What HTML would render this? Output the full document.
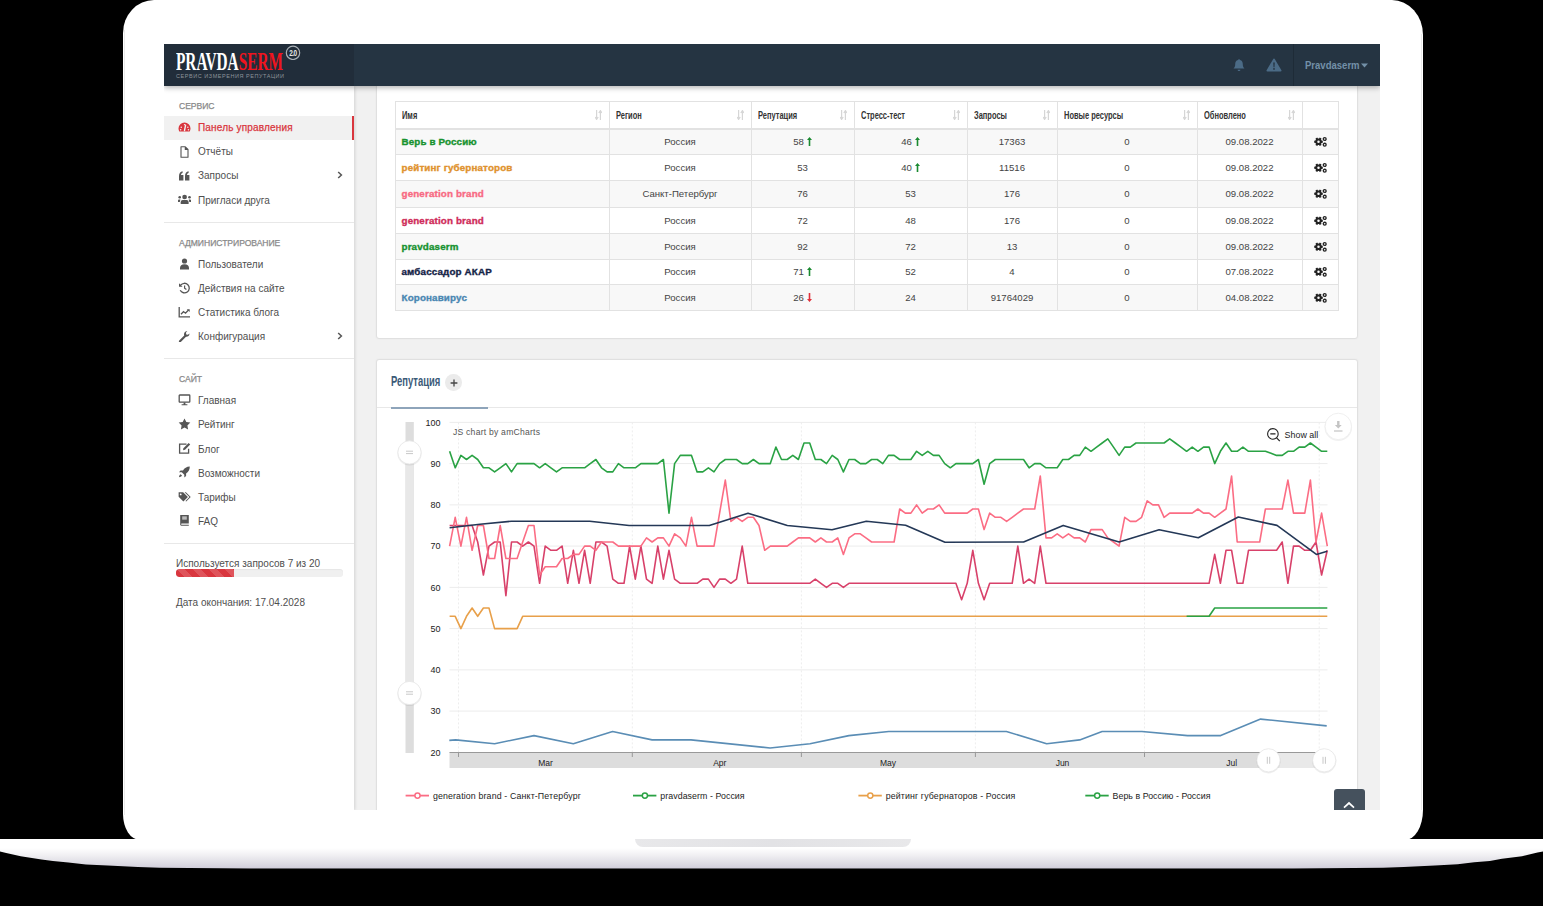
<!DOCTYPE html>
<html><head><meta charset="utf-8">
<style>
*{margin:0;padding:0;box-sizing:border-box}
html,body{width:1543px;height:906px;overflow:hidden;background:#000;font-family:"Liberation Sans",sans-serif}
.a{position:absolute}
#body{position:absolute;left:123px;top:0;width:1300px;height:840px;background:#fff;border-radius:31px 31px 18px 17px / 33px 35px 30px 26px}
#base{position:absolute;left:0;top:839px;width:1543px;height:30px;background:linear-gradient(#fff 0,#fff 9px,#f1f0f3 16px,#dedce4 24px,#d2cfdb 29px,#bdbac6 30px);clip-path:polygon(0 0,1543px 0,1543px 12.6px,1537.5px 13.6px,1522px 17.3px,1502px 19.8px,1489.8px 21.9px,1474.2px 23.2px,1457.7px 25.3px,1434.8px 26.6px,1403.7px 28.1px,1383px 28.7px,1293px 29.6px,250px 29.6px,160px 28.7px,137.9px 28.1px,107.8px 26.6px,86px 25.6px,68.4px 23.5px,52.9px 22px,41.5px 20.4px,20.7px 17.3px,6.2px 14.1px,0px 12.6px)}
#notch{position:absolute;left:635px;top:839px;width:276px;height:8px;background:linear-gradient(90deg,#e8e8ea,#e2e2e5 50%,#e8e8ea);border-radius:0 0 8px 8px}
#screen{position:absolute;left:164px;top:44px;width:1216px;height:766px;background:#f1f1f1;overflow:hidden}
#in{position:absolute;left:-164px;top:-44px;width:1543px;height:906px}
#hdr{position:absolute;left:164px;top:44px;width:1216px;height:42px;background:#253442;box-shadow:0 2px 5px rgba(0,0,0,.28);z-index:5}
#logo{position:absolute;left:0;top:0;width:190px;height:42px;background:#212d3a}
#side{position:absolute;left:164px;top:86px;width:190px;height:724px;background:#fff;box-shadow:1px 0 3px rgba(0,0,0,.13)}
.sl{position:absolute;left:179px;font-size:8.6px;color:#8a8a8a;line-height:12px;height:12px;margin-top:.8px;letter-spacing:-.05px;-webkit-text-stroke:.25px #8a8a8a}
.st{position:absolute;left:198px;font-size:10px;color:#4f4f4f;line-height:12px;height:12px;white-space:nowrap;margin-top:1.2px}
.ic{position:absolute;left:178px;width:13px;height:12px}
.ch{position:absolute;left:337px;width:6px;height:8px}
.dv{position:absolute;left:164px;width:190px;height:1px;background:#e8e8e8}
.panel{position:absolute;background:#fff;border:1px solid #e0e0e0;border-radius:3px;box-shadow:0 0 2px rgba(0,0,0,.05)}
.th{position:absolute;top:108.2px;font-size:11.5px;line-height:14px;color:#333;font-weight:bold;transform-origin:0 0;transform:scaleX(.65);white-space:nowrap}
.tn{position:absolute;left:401.5px;font-size:9.8px;line-height:13px;font-weight:bold;white-space:nowrap;letter-spacing:.15px;-webkit-text-stroke:.35px currentColor}
.td{position:absolute;font-size:9.6px;line-height:13px;color:#444;text-align:center;white-space:nowrap}
.ar{display:inline-block;width:5px;height:9px;margin-left:3px;vertical-align:-1px}
</style></head><body>
<div id="body"></div>
<div class="a" style="left:124px;top:30px;width:1px;height:785px;background:#e9e9e9"></div>
<div class="a" style="left:1421px;top:34px;width:1px;height:776px;background:#e9e9e9"></div>
<div id="base"></div>
<div id="notch"></div>
<div id="screen"><div id="in">
  <div id="side"></div>
  <!-- sidebar content -->
  <div class="sl" style="top:99px">СЕРВИС</div>
  <div class="a" style="left:164px;top:116px;width:190px;height:24px;background:#f1f1f1;border-right:2px solid #d9363e"></div>
  <svg class="ic" style="top:121px" viewBox="0 0 13 12"><path d="M6.5 1.5A6 6 0 0 0 .5 7.5c0 1.2.3 2 .8 2.9h10.4c.5-.9.8-1.7.8-2.9a6 6 0 0 0-6-6z" fill="#d9363e"/><path d="M6.5 9.5 7.6 4.2M3.2 6.2h.1M6.5 3.6h.1M9.8 6.2h.1M2.6 8.7h.1M10.4 8.7h.1" stroke="#f1f1f1" stroke-width="1.4" stroke-linecap="round"/></svg>
  <div class="st" style="top:121px;color:#d9363e;letter-spacing:.18px;-webkit-text-stroke:.25px #d9363e">Панель управления</div>
  <svg class="ic" style="top:146px" viewBox="0 0 13 12"><path d="M3 .8h4.3L10 3.5v7.7H3z M7.3.8v2.7H10" fill="none" stroke="#555" stroke-width="1.1" stroke-linejoin="round"/></svg>
  <div class="st" style="top:145px">Отчёты</div>
  <svg class="ic" style="top:170px" viewBox="0 0 13 12"><path d="M1 6.3C1 3.2 2.4 1.7 4.6 1.3v1.6C3.5 3.3 3 4 3 5h2.4v5.5H1zM7 6.3C7 3.2 8.4 1.7 10.6 1.3v1.6C9.5 3.3 9 4 9 5h2.4v5.5H7z" fill="#555"/></svg>
  <div class="st" style="top:169px">Запросы</div>
  <svg class="ch" style="top:171px" viewBox="0 0 6 8"><path d="M1.2 1 4.4 4 1.2 7" fill="none" stroke="#555" stroke-width="1.5"/></svg>
  <svg class="ic" style="top:194px" viewBox="0 0 13 12"><circle cx="6.6" cy="3" r="2.35" fill="#555"/><circle cx="1.7" cy="3.2" r="1.3" fill="#555"/><circle cx="11.5" cy="3.2" r="1.3" fill="#555"/><path d="M2.7 9.9V8.2c0-1.4.9-2.1 2-2.1h3.9c1.1 0 2 .7 2 2.1v1.7z" fill="#555"/><path d="M0 8V6.6c0-.7.5-1.1 1.1-1.1h1.3l-.6 2.5zM13.1 8V6.6c0-.7-.5-1.1-1.1-1.1h-1.3l.6 2.5z" fill="#555"/></svg>
  <div class="st" style="top:194px">Пригласи друга</div>
  <div class="dv" style="top:222px"></div>

  <div class="sl" style="top:236px">АДМИНИСТРИРОВАНИЕ</div>
  <svg class="ic" style="top:258px" viewBox="0 0 13 12"><circle cx="6.5" cy="3" r="2.6" fill="#555"/><path d="M2 11.5V10c0-2.3 1.6-3.8 4.5-3.8S11 7.7 11 10v1.5z" fill="#555"/></svg>
  <div class="st" style="top:258px">Пользователи</div>
  <svg class="ic" style="top:282px" viewBox="0 0 13 12"><path d="M2.6 3.2A4.8 4.8 0 1 1 2.2 8.3" fill="none" stroke="#555" stroke-width="1.3"/><path d="M1 1.2v3.6h3.6z" fill="#555"/><path d="M6.6 3.6v2.7l1.8 1.3" fill="none" stroke="#555" stroke-width="1.2"/></svg>
  <div class="st" style="top:282px">Действия на сайте</div>
  <svg class="ic" style="top:306px" viewBox="0 0 13 12"><path d="M1.2 1v9.8H12" fill="none" stroke="#555" stroke-width="1.3"/><path d="M3 8.3 5.5 5.6l2 1.6 3-3.2" fill="none" stroke="#555" stroke-width="1.3"/><path d="M8.8 3.2h2.9v2.9z" fill="#555"/></svg>
  <div class="st" style="top:306px">Статистика блога</div>
  <svg class="ic" style="top:330px" viewBox="0 0 13 12"><path d="M2 11.2 7 6.2" stroke="#555" stroke-width="2.2" stroke-linecap="round"/><path d="M6.2 5.5C5.6 3.6 6.7 1.2 9.3 1.1l-1.4 1.7.4 1.6 1.6.4 1.6-1.4c0 2.6-2.3 3.8-4.3 3.1z" fill="#555"/></svg>
  <div class="st" style="top:330px">Конфигурация</div>
  <svg class="ch" style="top:332px" viewBox="0 0 6 8"><path d="M1.2 1 4.4 4 1.2 7" fill="none" stroke="#555" stroke-width="1.5"/></svg>
  <div class="dv" style="top:358px"></div>

  <div class="sl" style="top:372px">САЙТ</div>
  <svg class="ic" style="top:394px" viewBox="0 0 13 12"><rect x="1.2" y="1" width="10.6" height="7.2" rx=".6" fill="none" stroke="#555" stroke-width="1.3"/><path d="M5.6 8.6h1.8v1.6h2v1H3.6v-1h2z" fill="#555"/></svg>
  <div class="st" style="top:394px">Главная</div>
  <svg class="ic" style="top:418px" viewBox="0 0 13 12"><path d="M6.5.4l1.8 3.7 4 .5-2.9 2.8.7 4-3.6-1.9-3.6 1.9.7-4L.7 4.6l4-.5z" fill="#555"/></svg>
  <div class="st" style="top:418px">Рейтинг</div>
  <svg class="ic" style="top:442px" viewBox="0 0 13 12"><path d="M8.5 2.2H1.6v9h9V6.8" fill="none" stroke="#555" stroke-width="1.3"/><path d="M5 8.2l.4-2 5.2-5.2 1.6 1.6L7 7.8z" fill="#555"/></svg>
  <div class="st" style="top:443px">Блог</div>
  <svg class="ic" style="top:466px" viewBox="0 0 13 12"><path d="M11.8.6C8.5.6 6.5 2.3 5 4.5H2.5L1 6.3h2.8l2.5 2.5V11.6l1.8-1.5V7.6c2.2-1.5 3.7-3.5 3.7-7z" fill="#555"/><path d="M2.6 8.2c-1 .6-1.6 2-1.6 3 1 0 2.4-.6 3-1.6z" fill="#555"/></svg>
  <div class="st" style="top:467px">Возможности</div>
  <svg class="ic" style="top:491px" viewBox="0 0 13 12"><path d="M.6 1.3h4.5l4.8 4.8-4.5 4.5L.6 5.8z" fill="#555"/><circle cx="2.7" cy="3.4" r=".9" fill="#fff"/><path d="M6.6 1.3h1.3l4.8 4.8-4.5 4.5-.7-.6 3.9-3.9z" fill="#555"/></svg>
  <div class="st" style="top:491px">Тарифы</div>
  <svg class="ic" style="top:514px" viewBox="0 0 13 12"><path d="M2.2 1h8.6v8.4H3.5a.8.8 0 0 0 0 1.3h7.3v1H3.3c-.7 0-1.1-.5-1.1-1.2z" fill="#555"/><rect x="4.2" y="2.6" width="4.6" height="1" fill="#fff"/><rect x="4.2" y="4.4" width="4.6" height="1" fill="#fff"/></svg>
  <div class="st" style="top:515px">FAQ</div>
  <div class="dv" style="top:543px"></div>

  <div class="st" style="left:176px;top:557px">Используется запросов 7 из 20</div>
  <div class="a" style="left:176px;top:569px;width:167px;height:8px;background:#f0f0f0;border-radius:3px;overflow:hidden;box-shadow:inset 0 1px 1px rgba(0,0,0,.04)"><div class="a" style="left:0;top:0;width:58px;height:8px;background:#d9363e linear-gradient(45deg,rgba(255,255,255,.15) 25%,transparent 25%,transparent 50%,rgba(255,255,255,.15) 50%,rgba(255,255,255,.15) 75%,transparent 75%,transparent);background-size:16px 16px;border-radius:3px 0 0 3px"></div></div>
  <div class="st" style="left:176px;top:596px">Дата окончания: 17.04.2028</div>

  <!-- header -->
  <div id="hdr"><div id="logo">
    <div class="a" id="lt" style="left:12px;top:3.2px;font-family:'Liberation Serif',serif;font-size:24.5px;line-height:30px;color:#fff;font-weight:bold;transform-origin:0 0;transform:scaleX(.625);white-space:nowrap;letter-spacing:0">PRAVDA<span style="color:#f0141e">SERM</span></div>
    <svg class="a" style="left:121px;top:0px" width="16" height="16" viewBox="0 0 16 16"><circle cx="8" cy="8.8" r="6.7" fill="none" stroke="#aab1b7" stroke-width="1.2"/><text x="8" y="12" text-anchor="middle" font-family="Liberation Sans" font-weight="bold" font-size="9.2" fill="#e8e8e8" letter-spacing="-.8" transform="translate(8 0) scale(.7 1) translate(-8 0)">2.0</text></svg>
    <div class="a" id="ls" style="left:12px;top:29px;font-size:5.5px;line-height:7px;color:#8d9399;letter-spacing:.55px;white-space:nowrap">СЕРВИС ИЗМЕРЕНИЯ РЕПУТАЦИИ</div>
  </div>
  <svg class="a" style="left:1068px;top:14px" width="14" height="14" viewBox="0 0 14 14"><path d="M7 1.2c.6 0 1 .4 1 .9 2 .5 2.8 2 2.8 4.2 0 2.2.6 3.3 1.7 4.3H1.5c1.1-1 1.7-2.1 1.7-4.3 0-2.2.8-3.7 2.8-4.2 0-.5.4-.9 1-.9z" fill="#4b6b86"/><path d="M5.6 11.8h2.8c0 .8-.6 1.3-1.4 1.3s-1.4-.5-1.4-1.3z" fill="#4b6b86"/></svg>
  <svg class="a" style="left:1102px;top:14px" width="16" height="14" viewBox="0 0 16 14"><path d="M8 .6c.4 0 .7.2.9.6l6.5 11c.4.7 0 1.4-.8 1.4H1.4c-.8 0-1.2-.7-.8-1.4l6.5-11c.2-.4.5-.6.9-.6z" fill="#4b6b86"/><path d="M7.2 4.6h1.6l-.3 4.6h-1z" fill="#253442"/><circle cx="8" cy="10.9" r=".9" fill="#253442"/></svg>
  <div class="a" style="left:1129px;top:0;width:1px;height:42px;background:#1e2b37"></div>
  <div class="a" style="left:1140.5px;top:15px;font-size:10.6px;line-height:13px;color:#7390a8;font-weight:bold;white-space:nowrap;transform-origin:0 0;transform:scaleX(.9)">Pravdaserm</div>
  <svg class="a" style="left:1197px;top:19px" width="7" height="5" viewBox="0 0 7 5"><path d="M0 .5h7L3.5 4.5z" fill="#7390a8"/></svg>
  </div>
  <div class="panel" style="left:376px;top:64px;width:982px;height:275px"></div>
<div class="a" style="left:395px;top:128px;width:943px;height:26px;background:#f8f8f8"></div>
<div class="a" style="left:395px;top:154px;width:943px;height:26px;background:#fff"></div>
<div class="a" style="left:395px;top:180px;width:943px;height:27px;background:#f8f8f8"></div>
<div class="a" style="left:395px;top:207px;width:943px;height:26px;background:#fff"></div>
<div class="a" style="left:395px;top:233px;width:943px;height:26px;background:#f8f8f8"></div>
<div class="a" style="left:395px;top:259px;width:943px;height:25px;background:#fff"></div>
<div class="a" style="left:395px;top:284px;width:943px;height:26px;background:#f8f8f8"></div>
<div class="a" style="left:395px;top:101px;width:944px;height:1px;background:#e2e2e2"></div>
<div class="a" style="left:395px;top:128px;width:944px;height:2px;background:#e2e2e2"></div>
<div class="a" style="left:395px;top:154px;width:944px;height:1px;background:#e2e2e2"></div>
<div class="a" style="left:395px;top:180px;width:944px;height:1px;background:#e2e2e2"></div>
<div class="a" style="left:395px;top:207px;width:944px;height:1px;background:#e2e2e2"></div>
<div class="a" style="left:395px;top:233px;width:944px;height:1px;background:#e2e2e2"></div>
<div class="a" style="left:395px;top:259px;width:944px;height:1px;background:#e2e2e2"></div>
<div class="a" style="left:395px;top:284px;width:944px;height:1px;background:#e2e2e2"></div>
<div class="a" style="left:395px;top:310px;width:944px;height:1px;background:#e2e2e2"></div>
<div class="a" style="left:395px;top:101px;width:1px;height:210px;background:#e2e2e2"></div>
<div class="a" style="left:609px;top:101px;width:1px;height:210px;background:#e2e2e2"></div>
<div class="a" style="left:751px;top:101px;width:1px;height:210px;background:#e2e2e2"></div>
<div class="a" style="left:854px;top:101px;width:1px;height:210px;background:#e2e2e2"></div>
<div class="a" style="left:967px;top:101px;width:1px;height:210px;background:#e2e2e2"></div>
<div class="a" style="left:1057px;top:101px;width:1px;height:210px;background:#e2e2e2"></div>
<div class="a" style="left:1197px;top:101px;width:1px;height:210px;background:#e2e2e2"></div>
<div class="a" style="left:1302px;top:101px;width:1px;height:210px;background:#e2e2e2"></div>
<div class="a" style="left:1338px;top:101px;width:1px;height:210px;background:#e2e2e2"></div>
<div class="th" style="left:401.8px">Имя</div>
<svg class="a" style="left:595px;top:110px" width="7" height="10" viewBox="0 0 7 10"><path d="M1.6 0v8M0 7l1.6 2.4L3.2 7M5.4 10V2M3.8 3l1.6-2.4L7 3" fill="none" stroke="#d6d6d6" stroke-width="1.2"/></svg>
<div class="th" style="left:615.8px">Регион</div>
<svg class="a" style="left:737px;top:110px" width="7" height="10" viewBox="0 0 7 10"><path d="M1.6 0v8M0 7l1.6 2.4L3.2 7M5.4 10V2M3.8 3l1.6-2.4L7 3" fill="none" stroke="#d6d6d6" stroke-width="1.2"/></svg>
<div class="th" style="left:757.8px">Репутация</div>
<svg class="a" style="left:840px;top:110px" width="7" height="10" viewBox="0 0 7 10"><path d="M1.6 0v8M0 7l1.6 2.4L3.2 7M5.4 10V2M3.8 3l1.6-2.4L7 3" fill="none" stroke="#d6d6d6" stroke-width="1.2"/></svg>
<div class="th" style="left:860.8px">Стресс-тест</div>
<svg class="a" style="left:953px;top:110px" width="7" height="10" viewBox="0 0 7 10"><path d="M1.6 0v8M0 7l1.6 2.4L3.2 7M5.4 10V2M3.8 3l1.6-2.4L7 3" fill="none" stroke="#d6d6d6" stroke-width="1.2"/></svg>
<div class="th" style="left:973.8px">Запросы</div>
<svg class="a" style="left:1043px;top:110px" width="7" height="10" viewBox="0 0 7 10"><path d="M1.6 0v8M0 7l1.6 2.4L3.2 7M5.4 10V2M3.8 3l1.6-2.4L7 3" fill="none" stroke="#d6d6d6" stroke-width="1.2"/></svg>
<div class="th" style="left:1063.8px">Новые ресурсы</div>
<svg class="a" style="left:1183px;top:110px" width="7" height="10" viewBox="0 0 7 10"><path d="M1.6 0v8M0 7l1.6 2.4L3.2 7M5.4 10V2M3.8 3l1.6-2.4L7 3" fill="none" stroke="#d6d6d6" stroke-width="1.2"/></svg>
<div class="th" style="left:1203.8px">Обновлено</div>
<svg class="a" style="left:1288px;top:110px" width="7" height="10" viewBox="0 0 7 10"><path d="M1.6 0v8M0 7l1.6 2.4L3.2 7M5.4 10V2M3.8 3l1.6-2.4L7 3" fill="none" stroke="#d6d6d6" stroke-width="1.2"/></svg>
<div class="tn" style="top:134.7px;color:#17922f">Верь в Россию</div>
<div class="td" style="left:609px;top:134.7px;width:142px">Россия</div>
<div class="td" style="left:751px;top:134.7px;width:103px">58<svg class="ar" viewBox="0 0 5 9"><path d="M2.5 0 5 3H3.3v6H1.7V3H0z" fill="#1a8a30"/></svg></div>
<div class="td" style="left:854px;top:134.7px;width:113px">46<svg class="ar" viewBox="0 0 5 9"><path d="M2.5 0 5 3H3.3v6H1.7V3H0z" fill="#1a8a30"/></svg></div>
<div class="td" style="left:967px;top:134.7px;width:90px">17363</div>
<div class="td" style="left:1057px;top:134.7px;width:140px">0</div>
<div class="td" style="left:1197px;top:134.7px;width:105px">09.08.2022</div>
<svg class="a" style="left:1314px;top:136px" width="13" height="11" viewBox="0 0 13 11"><path d="M7.58 4.52 L8.79 4.71 L8.79 6.69 L7.58 6.88 L7.06 7.78 L7.50 8.92 L5.79 9.91 L5.02 8.96 L3.98 8.96 L3.21 9.91 L1.50 8.92 L1.94 7.78 L1.42 6.88 L0.21 6.69 L0.21 4.71 L1.42 4.52 L1.94 3.62 L1.50 2.48 L3.21 1.49 L3.98 2.44 L5.02 2.44 L5.79 1.49 L7.50 2.48 L7.06 3.62z" fill="#222"/><circle cx="4.5" cy="5.7" r="1.25" fill="#f8f8f8"/><circle cx="10.7" cy="3" r="1.45" fill="none" stroke="#222" stroke-width="1.3"/><circle cx="10.7" cy="8.7" r="1.45" fill="none" stroke="#222" stroke-width="1.3"/></svg>
<div class="tn" style="top:160.7px;color:#e0922e">рейтинг губернаторов</div>
<div class="td" style="left:609px;top:160.7px;width:142px">Россия</div>
<div class="td" style="left:751px;top:160.7px;width:103px">53</div>
<div class="td" style="left:854px;top:160.7px;width:113px">40<svg class="ar" viewBox="0 0 5 9"><path d="M2.5 0 5 3H3.3v6H1.7V3H0z" fill="#1a8a30"/></svg></div>
<div class="td" style="left:967px;top:160.7px;width:90px">11516</div>
<div class="td" style="left:1057px;top:160.7px;width:140px">0</div>
<div class="td" style="left:1197px;top:160.7px;width:105px">09.08.2022</div>
<svg class="a" style="left:1314px;top:162px" width="13" height="11" viewBox="0 0 13 11"><path d="M7.58 4.52 L8.79 4.71 L8.79 6.69 L7.58 6.88 L7.06 7.78 L7.50 8.92 L5.79 9.91 L5.02 8.96 L3.98 8.96 L3.21 9.91 L1.50 8.92 L1.94 7.78 L1.42 6.88 L0.21 6.69 L0.21 4.71 L1.42 4.52 L1.94 3.62 L1.50 2.48 L3.21 1.49 L3.98 2.44 L5.02 2.44 L5.79 1.49 L7.50 2.48 L7.06 3.62z" fill="#222"/><circle cx="4.5" cy="5.7" r="1.25" fill="#fff"/><circle cx="10.7" cy="3" r="1.45" fill="none" stroke="#222" stroke-width="1.3"/><circle cx="10.7" cy="8.7" r="1.45" fill="none" stroke="#222" stroke-width="1.3"/></svg>
<div class="tn" style="top:187.2px;color:#f76a83">generation brand</div>
<div class="td" style="left:609px;top:187.2px;width:142px">Санкт-Петербург</div>
<div class="td" style="left:751px;top:187.2px;width:103px">76</div>
<div class="td" style="left:854px;top:187.2px;width:113px">53</div>
<div class="td" style="left:967px;top:187.2px;width:90px">176</div>
<div class="td" style="left:1057px;top:187.2px;width:140px">0</div>
<div class="td" style="left:1197px;top:187.2px;width:105px">09.08.2022</div>
<svg class="a" style="left:1314px;top:188px" width="13" height="11" viewBox="0 0 13 11"><path d="M7.58 4.52 L8.79 4.71 L8.79 6.69 L7.58 6.88 L7.06 7.78 L7.50 8.92 L5.79 9.91 L5.02 8.96 L3.98 8.96 L3.21 9.91 L1.50 8.92 L1.94 7.78 L1.42 6.88 L0.21 6.69 L0.21 4.71 L1.42 4.52 L1.94 3.62 L1.50 2.48 L3.21 1.49 L3.98 2.44 L5.02 2.44 L5.79 1.49 L7.50 2.48 L7.06 3.62z" fill="#222"/><circle cx="4.5" cy="5.7" r="1.25" fill="#f8f8f8"/><circle cx="10.7" cy="3" r="1.45" fill="none" stroke="#222" stroke-width="1.3"/><circle cx="10.7" cy="8.7" r="1.45" fill="none" stroke="#222" stroke-width="1.3"/></svg>
<div class="tn" style="top:213.7px;color:#cf2c5a">generation brand</div>
<div class="td" style="left:609px;top:213.7px;width:142px">Россия</div>
<div class="td" style="left:751px;top:213.7px;width:103px">72</div>
<div class="td" style="left:854px;top:213.7px;width:113px">48</div>
<div class="td" style="left:967px;top:213.7px;width:90px">176</div>
<div class="td" style="left:1057px;top:213.7px;width:140px">0</div>
<div class="td" style="left:1197px;top:213.7px;width:105px">09.08.2022</div>
<svg class="a" style="left:1314px;top:215px" width="13" height="11" viewBox="0 0 13 11"><path d="M7.58 4.52 L8.79 4.71 L8.79 6.69 L7.58 6.88 L7.06 7.78 L7.50 8.92 L5.79 9.91 L5.02 8.96 L3.98 8.96 L3.21 9.91 L1.50 8.92 L1.94 7.78 L1.42 6.88 L0.21 6.69 L0.21 4.71 L1.42 4.52 L1.94 3.62 L1.50 2.48 L3.21 1.49 L3.98 2.44 L5.02 2.44 L5.79 1.49 L7.50 2.48 L7.06 3.62z" fill="#222"/><circle cx="4.5" cy="5.7" r="1.25" fill="#fff"/><circle cx="10.7" cy="3" r="1.45" fill="none" stroke="#222" stroke-width="1.3"/><circle cx="10.7" cy="8.7" r="1.45" fill="none" stroke="#222" stroke-width="1.3"/></svg>
<div class="tn" style="top:239.7px;color:#17922f">pravdaserm</div>
<div class="td" style="left:609px;top:239.7px;width:142px">Россия</div>
<div class="td" style="left:751px;top:239.7px;width:103px">92</div>
<div class="td" style="left:854px;top:239.7px;width:113px">72</div>
<div class="td" style="left:967px;top:239.7px;width:90px">13</div>
<div class="td" style="left:1057px;top:239.7px;width:140px">0</div>
<div class="td" style="left:1197px;top:239.7px;width:105px">09.08.2022</div>
<svg class="a" style="left:1314px;top:241px" width="13" height="11" viewBox="0 0 13 11"><path d="M7.58 4.52 L8.79 4.71 L8.79 6.69 L7.58 6.88 L7.06 7.78 L7.50 8.92 L5.79 9.91 L5.02 8.96 L3.98 8.96 L3.21 9.91 L1.50 8.92 L1.94 7.78 L1.42 6.88 L0.21 6.69 L0.21 4.71 L1.42 4.52 L1.94 3.62 L1.50 2.48 L3.21 1.49 L3.98 2.44 L5.02 2.44 L5.79 1.49 L7.50 2.48 L7.06 3.62z" fill="#222"/><circle cx="4.5" cy="5.7" r="1.25" fill="#f8f8f8"/><circle cx="10.7" cy="3" r="1.45" fill="none" stroke="#222" stroke-width="1.3"/><circle cx="10.7" cy="8.7" r="1.45" fill="none" stroke="#222" stroke-width="1.3"/></svg>
<div class="tn" style="top:265.2px;color:#142447">амбассадор АКАР</div>
<div class="td" style="left:609px;top:265.2px;width:142px">Россия</div>
<div class="td" style="left:751px;top:265.2px;width:103px">71<svg class="ar" viewBox="0 0 5 9"><path d="M2.5 0 5 3H3.3v6H1.7V3H0z" fill="#1a8a30"/></svg></div>
<div class="td" style="left:854px;top:265.2px;width:113px">52</div>
<div class="td" style="left:967px;top:265.2px;width:90px">4</div>
<div class="td" style="left:1057px;top:265.2px;width:140px">0</div>
<div class="td" style="left:1197px;top:265.2px;width:105px">07.08.2022</div>
<svg class="a" style="left:1314px;top:266px" width="13" height="11" viewBox="0 0 13 11"><path d="M7.58 4.52 L8.79 4.71 L8.79 6.69 L7.58 6.88 L7.06 7.78 L7.50 8.92 L5.79 9.91 L5.02 8.96 L3.98 8.96 L3.21 9.91 L1.50 8.92 L1.94 7.78 L1.42 6.88 L0.21 6.69 L0.21 4.71 L1.42 4.52 L1.94 3.62 L1.50 2.48 L3.21 1.49 L3.98 2.44 L5.02 2.44 L5.79 1.49 L7.50 2.48 L7.06 3.62z" fill="#222"/><circle cx="4.5" cy="5.7" r="1.25" fill="#fff"/><circle cx="10.7" cy="3" r="1.45" fill="none" stroke="#222" stroke-width="1.3"/><circle cx="10.7" cy="8.7" r="1.45" fill="none" stroke="#222" stroke-width="1.3"/></svg>
<div class="tn" style="top:290.7px;color:#4a87b2">Коронавирус</div>
<div class="td" style="left:609px;top:290.7px;width:142px">Россия</div>
<div class="td" style="left:751px;top:290.7px;width:103px">26<svg class="ar" viewBox="0 0 5 9"><path d="M2.5 9 5 6H3.3V0H1.7v6H0z" fill="#e0303a"/></svg></div>
<div class="td" style="left:854px;top:290.7px;width:113px">24</div>
<div class="td" style="left:967px;top:290.7px;width:90px">91764029</div>
<div class="td" style="left:1057px;top:290.7px;width:140px">0</div>
<div class="td" style="left:1197px;top:290.7px;width:105px">04.08.2022</div>
<svg class="a" style="left:1314px;top:292px" width="13" height="11" viewBox="0 0 13 11"><path d="M7.58 4.52 L8.79 4.71 L8.79 6.69 L7.58 6.88 L7.06 7.78 L7.50 8.92 L5.79 9.91 L5.02 8.96 L3.98 8.96 L3.21 9.91 L1.50 8.92 L1.94 7.78 L1.42 6.88 L0.21 6.69 L0.21 4.71 L1.42 4.52 L1.94 3.62 L1.50 2.48 L3.21 1.49 L3.98 2.44 L5.02 2.44 L5.79 1.49 L7.50 2.48 L7.06 3.62z" fill="#222"/><circle cx="4.5" cy="5.7" r="1.25" fill="#f8f8f8"/><circle cx="10.7" cy="3" r="1.45" fill="none" stroke="#222" stroke-width="1.3"/><circle cx="10.7" cy="8.7" r="1.45" fill="none" stroke="#222" stroke-width="1.3"/></svg>
  <div class="panel" style="left:376px;top:359px;width:982px;height:480px"></div>
<div class="a" style="left:391px;top:372px;font-size:14.3px;line-height:18px;font-weight:bold;color:#3b5a78;transform-origin:0 0;transform:scaleX(.66);white-space:nowrap" id="rt">Репутация</div>
<div class="a" style="left:445.4px;top:374.3px;width:16.4px;height:16.4px;border-radius:50%;background:#ebebeb"></div>
<svg class="a" style="left:449.6px;top:378.5px" width="8" height="8" viewBox="0 0 8 8"><path d="M4 .6v6.8M.6 4h6.8" stroke="#444" stroke-width="1.3"/></svg>
<div class="a" style="left:377px;top:407px;width:980px;height:1px;background:#e8e8e8"></div>
<div class="a" style="left:391px;top:406.5px;width:97px;height:2px;background:#8ea4ba"></div>
<div class="a" style="left:1333.5px;top:789.4px;width:31.5px;height:30px;background:#45515d;border-radius:3px"></div>
<svg class="a" style="left:1343px;top:801px" width="12" height="8" viewBox="0 0 12 8"><path d="M1 6.6 6 2l5 4.6" fill="none" stroke="#fff" stroke-width="1.7"/></svg>
<svg class="a" style="left:0;top:0" width="1543" height="906" viewBox="0 0 1543 906">
<line x1="449.5" y1="422.4" x2="1327.5" y2="422.4" stroke="#ececec" stroke-width="1"/>
<text x="440.5" y="425.6" text-anchor="end" font-family="Liberation Sans" font-size="9" fill="#222">100</text>
<line x1="449.5" y1="463.6" x2="1327.5" y2="463.6" stroke="#ececec" stroke-width="1"/>
<text x="440.5" y="466.8" text-anchor="end" font-family="Liberation Sans" font-size="9" fill="#222">90</text>
<line x1="449.5" y1="504.9" x2="1327.5" y2="504.9" stroke="#ececec" stroke-width="1"/>
<text x="440.5" y="508.1" text-anchor="end" font-family="Liberation Sans" font-size="9" fill="#222">80</text>
<line x1="449.5" y1="546.1" x2="1327.5" y2="546.1" stroke="#ececec" stroke-width="1"/>
<text x="440.5" y="549.4" text-anchor="end" font-family="Liberation Sans" font-size="9" fill="#222">70</text>
<line x1="449.5" y1="587.4" x2="1327.5" y2="587.4" stroke="#ececec" stroke-width="1"/>
<text x="440.5" y="590.6" text-anchor="end" font-family="Liberation Sans" font-size="9" fill="#222">60</text>
<line x1="449.5" y1="628.6" x2="1327.5" y2="628.6" stroke="#ececec" stroke-width="1"/>
<text x="440.5" y="631.9" text-anchor="end" font-family="Liberation Sans" font-size="9" fill="#222">50</text>
<line x1="449.5" y1="669.9" x2="1327.5" y2="669.9" stroke="#ececec" stroke-width="1"/>
<text x="440.5" y="673.1" text-anchor="end" font-family="Liberation Sans" font-size="9" fill="#222">40</text>
<line x1="449.5" y1="711.1" x2="1327.5" y2="711.1" stroke="#ececec" stroke-width="1"/>
<text x="440.5" y="714.4" text-anchor="end" font-family="Liberation Sans" font-size="9" fill="#222">30</text>
<text x="440.5" y="755.6" text-anchor="end" font-family="Liberation Sans" font-size="9" fill="#222">20</text>
<line x1="458.5" y1="422.4" x2="458.5" y2="752" stroke="#ededed" stroke-width="1" stroke-dasharray="2,2"/>
<line x1="632.3" y1="422.4" x2="632.3" y2="752" stroke="#ededed" stroke-width="1" stroke-dasharray="2,2"/>
<line x1="801.4" y1="422.4" x2="801.4" y2="752" stroke="#ededed" stroke-width="1" stroke-dasharray="2,2"/>
<line x1="975.4" y1="422.4" x2="975.4" y2="752" stroke="#ededed" stroke-width="1" stroke-dasharray="2,2"/>
<line x1="1144.5" y1="422.4" x2="1144.5" y2="752" stroke="#ededed" stroke-width="1" stroke-dasharray="2,2"/>
<line x1="1319.2" y1="422.4" x2="1319.2" y2="752" stroke="#ededed" stroke-width="1" stroke-dasharray="2,2"/>
<rect x="449.5" y="752.5" width="878" height="15.5" fill="#dddddd"/>
<rect x="1268.5" y="752.5" width="56" height="15.5" fill="#e9e9e9"/>
<line x1="449.5" y1="752.5" x2="1327.5" y2="752.5" stroke="#999" stroke-width="1"/>
<line x1="458.5" y1="752.5" x2="458.5" y2="757" stroke="#999" stroke-width="1"/>
<line x1="632.3" y1="752.5" x2="632.3" y2="757" stroke="#999" stroke-width="1"/>
<line x1="801.4" y1="752.5" x2="801.4" y2="757" stroke="#999" stroke-width="1"/>
<line x1="975.4" y1="752.5" x2="975.4" y2="757" stroke="#999" stroke-width="1"/>
<line x1="1144.5" y1="752.5" x2="1144.5" y2="757" stroke="#999" stroke-width="1"/>
<line x1="1319.2" y1="752.5" x2="1319.2" y2="757" stroke="#999" stroke-width="1"/>
<text x="545.5" y="765.5" text-anchor="middle" font-family="Liberation Sans" font-size="8.5" fill="#222">Mar</text>
<text x="719.8" y="765.5" text-anchor="middle" font-family="Liberation Sans" font-size="8.5" fill="#222">Apr</text>
<text x="888" y="765.5" text-anchor="middle" font-family="Liberation Sans" font-size="8.5" fill="#222">May</text>
<text x="1062.5" y="765.5" text-anchor="middle" font-family="Liberation Sans" font-size="8.5" fill="#222">Jun</text>
<text x="1231.8" y="765.5" text-anchor="middle" font-family="Liberation Sans" font-size="8.5" fill="#222">Jul</text>
<rect x="405.5" y="422" width="8.3" height="331" fill="#dddddd"/><rect x="405.5" y="452.4" width="8.3" height="240.6" fill="#e8e8e8"/>
<polyline points="449.3,740.4 455.7,739.9 494.6,743.7 534,735.6 573.3,743.7 612.6,731.5 652.1,739.9 691,739.9 770.1,748 810,743.7 848.9,735.6 888.7,731.5 1006.4,731.5 1046.7,743.7 1079.7,739.9 1102.1,731.5 1141.9,731.5 1187.6,735.6 1220.7,735.6 1260.6,719.1 1326.7,725.9" fill="none" stroke="#5a8db5" stroke-width="1.6" stroke-linejoin="round"/>
<polyline points="449.6,616.3 455.2,616.3 460.9,628.6 466.5,616.3 472.1,608.0 477.7,616.3 483.4,608.0 489.0,608.0 494.6,628.6 500.2,628.6 505.9,628.6 511.5,628.6 517.1,628.6 522.7,616.3 528.4,616.3 534.0,616.3 539.6,616.3 545.2,616.3 550.9,616.3 556.5,616.3 562.1,616.3 567.7,616.3 573.4,616.3 579.0,616.3 584.6,616.3 590.2,616.3 595.9,616.3 601.5,616.3 607.1,616.3 612.8,616.3 618.4,616.3 624.0,616.3 629.6,616.3 635.3,616.3 640.9,616.3 646.5,616.3 652.1,616.3 657.8,616.3 663.4,616.3 669.0,616.3 674.6,616.3 680.3,616.3 685.9,616.3 691.5,616.3 697.1,616.3 702.8,616.3 708.4,616.3 714.0,616.3 719.6,616.3 725.3,616.3 730.9,616.3 736.5,616.3 742.2,616.3 747.8,616.3 753.4,616.3 759.0,616.3 764.7,616.3 770.3,616.3 775.9,616.3 781.5,616.3 787.2,616.3 792.8,616.3 798.4,616.3 804.0,616.3 809.7,616.3 815.3,616.3 820.9,616.3 826.5,616.3 832.2,616.3 837.8,616.3 843.4,616.3 849.0,616.3 854.7,616.3 860.3,616.3 865.9,616.3 871.6,616.3 877.2,616.3 882.8,616.3 888.4,616.3 894.1,616.3 899.7,616.3 905.3,616.3 910.9,616.3 916.6,616.3 922.2,616.3 927.8,616.3 933.4,616.3 939.1,616.3 944.7,616.3 950.3,616.3 955.9,616.3 961.6,616.3 967.2,616.3 972.8,616.3 978.4,616.3 984.1,616.3 989.7,616.3 995.3,616.3 1000.9,616.3 1006.6,616.3 1012.2,616.3 1017.8,616.3 1023.5,616.3 1029.1,616.3 1034.7,616.3 1040.3,616.3 1046.0,616.3 1051.6,616.3 1057.2,616.3 1062.8,616.3 1068.5,616.3 1074.1,616.3 1079.7,616.3 1085.3,616.3 1091.0,616.3 1096.6,616.3 1102.2,616.3 1107.8,616.3 1113.5,616.3 1119.1,616.3 1124.7,616.3 1130.3,616.3 1136.0,616.3 1141.6,616.3 1147.2,616.3 1152.8,616.3 1158.5,616.3 1164.1,616.3 1169.7,616.3 1175.4,616.3 1181.0,616.3 1186.6,616.3 1192.2,616.3 1197.9,616.3 1203.5,616.3 1209.1,616.3 1214.7,616.3 1220.4,616.3 1226.0,616.3 1231.6,616.3 1237.2,616.3 1242.9,616.3 1248.5,616.3 1254.1,616.3 1259.7,616.3 1265.4,616.3 1271.0,616.3 1276.6,616.3 1282.2,616.3 1287.9,616.3 1293.5,616.3 1299.1,616.3 1304.8,616.3 1310.4,616.3 1316.0,616.3 1321.6,616.3 1327.3,616.3" fill="none" stroke="#e8a04a" stroke-width="1.6" stroke-linejoin="round"/>
<polyline points="1186.6,616.3 1192.2,616.3 1197.9,616.3 1203.5,616.3 1209.1,616.3 1214.7,608.0 1220.4,608.0 1226.0,608.0 1231.6,608.0 1237.2,608.0 1242.9,608.0 1248.5,608.0 1254.1,608.0 1259.7,608.0 1265.4,608.0 1271.0,608.0 1276.6,608.0 1282.2,608.0 1287.9,608.0 1293.5,608.0 1299.1,608.0 1304.8,608.0 1310.4,608.0 1316.0,608.0 1321.6,608.0 1327.3,608.0" fill="none" stroke="#2aa244" stroke-width="1.6" stroke-linejoin="round"/>
<polyline points="449.6,525.5 455.2,525.5 460.9,525.5 466.5,525.5 472.1,525.5 477.7,542.0 483.4,575.0 489.0,546.1 494.6,542.0 500.2,542.0 505.9,595.6 511.5,542.0 517.1,542.0 522.7,546.1 528.4,542.0 534.0,546.1 539.6,583.3 545.2,546.1 550.9,550.3 556.5,550.3 562.1,546.1 567.7,583.3 573.4,550.3 579.0,583.3 584.6,550.3 590.2,583.3 595.9,542.0 601.5,542.0 607.1,546.1 612.8,579.1 618.4,583.3 624.0,583.3 629.6,546.1 635.3,579.1 640.9,546.1 646.5,579.1 652.1,583.3 657.8,546.1 663.4,579.1 669.0,550.3 674.6,579.1 680.3,583.3 685.9,583.3 691.5,583.3 697.1,583.3 702.8,579.1 708.4,579.1 714.0,587.4 719.6,579.1 725.3,579.1 730.9,583.3 736.5,579.1 742.2,546.1 747.8,583.3 753.4,583.3 759.0,583.3 764.7,583.3 770.3,583.3 775.9,583.3 781.5,583.3 787.2,583.3 792.8,583.3 798.4,583.3 804.0,583.3 809.7,583.3 815.3,579.1 820.9,583.3 826.5,587.4 832.2,583.3 837.8,583.3 843.4,587.4 849.0,583.3 854.7,583.3 860.3,583.3 865.9,583.3 871.6,583.3 877.2,583.3 882.8,583.3 888.4,583.3 894.1,583.3 899.7,583.3 905.3,583.3 910.9,583.3 916.6,583.3 922.2,583.3 927.8,583.3 933.4,583.3 939.1,583.3 944.7,583.3 950.3,583.3 955.9,583.3 961.6,599.8 967.2,583.3 972.8,550.3 978.4,583.3 984.1,599.8 989.7,583.3 995.3,583.3 1000.9,583.3 1006.6,583.3 1012.2,583.3 1017.8,546.1 1023.5,583.3 1029.1,579.1 1034.7,583.3 1040.3,546.1 1046.0,583.3 1051.6,583.3 1057.2,583.3 1062.8,583.3 1068.5,583.3 1074.1,583.3 1079.7,583.3 1085.3,583.3 1091.0,583.3 1096.6,583.3 1102.2,583.3 1107.8,583.3 1113.5,583.3 1119.1,583.3 1124.7,583.3 1130.3,583.3 1136.0,583.3 1141.6,583.3 1147.2,583.3 1152.8,583.3 1158.5,583.3 1164.1,583.3 1169.7,583.3 1175.4,583.3 1181.0,583.3 1186.6,583.3 1192.2,583.3 1197.9,583.3 1203.5,583.3 1209.1,583.3 1214.7,554.4 1220.4,583.3 1226.0,550.3 1231.6,550.3 1237.2,583.3 1242.9,583.3 1248.5,550.3 1254.1,550.3 1259.7,550.3 1265.4,550.3 1271.0,550.3 1276.6,550.3 1282.2,542.0 1287.9,583.3 1293.5,546.1 1299.1,546.1 1304.8,550.3 1310.4,550.3 1316.0,542.0 1321.6,575.0 1327.3,550.3" fill="none" stroke="#d8416a" stroke-width="1.6" stroke-linejoin="round"/>
<polyline points="449.6,546.1 455.2,517.3 460.9,546.1 466.5,517.3 472.1,550.3 477.7,525.5 483.4,525.5 489.0,558.5 494.6,558.5 500.2,525.5 505.9,558.5 511.5,558.5 517.1,558.5 522.7,542.0 528.4,525.5 534.0,525.5 539.6,575.0 545.2,566.8 550.9,566.8 556.5,566.8 562.1,558.5 567.7,558.5 573.4,554.4 579.0,554.4 584.6,546.1 590.2,546.1 595.9,550.3 601.5,542.0 607.1,542.0 612.8,542.0 618.4,546.1 624.0,546.1 629.6,546.1 635.3,546.1 640.9,546.1 646.5,537.9 652.1,542.0 657.8,537.9 663.4,537.9 669.0,546.1 674.6,533.8 680.3,537.9 685.9,546.1 691.5,517.3 697.1,546.1 702.8,546.1 708.4,546.1 714.0,546.1 719.6,513.1 725.3,480.1 730.9,521.4 736.5,517.3 742.2,521.4 747.8,517.3 753.4,517.3 759.0,525.5 764.7,550.3 770.3,546.1 775.9,546.1 781.5,546.1 787.2,546.1 792.8,542.0 798.4,537.9 804.0,537.9 809.7,537.9 815.3,542.0 820.9,537.9 826.5,542.0 832.2,542.0 837.8,537.9 843.4,554.4 849.0,537.9 854.7,533.8 860.3,533.8 865.9,537.9 871.6,542.0 877.2,542.0 882.8,542.0 888.4,542.0 894.1,542.0 899.7,509.0 905.3,513.1 910.9,513.1 916.6,504.9 922.2,513.1 927.8,509.0 933.4,509.0 939.1,504.9 944.7,513.1 950.3,513.1 955.9,513.1 961.6,513.1 967.2,513.1 972.8,509.0 978.4,509.0 984.1,529.6 989.7,513.1 995.3,517.3 1000.9,517.3 1006.6,521.4 1012.2,517.3 1017.8,513.1 1023.5,509.0 1029.1,509.0 1034.7,509.0 1040.3,476.0 1046.0,537.9 1051.6,537.9 1057.2,533.8 1062.8,537.9 1068.5,533.8 1074.1,537.9 1079.7,537.9 1085.3,542.0 1091.0,529.6 1096.6,529.6 1102.2,529.6 1107.8,537.9 1113.5,542.0 1119.1,546.1 1124.7,517.3 1130.3,521.4 1136.0,521.4 1141.6,517.3 1147.2,500.8 1152.8,504.9 1158.5,504.9 1164.1,517.3 1169.7,513.1 1175.4,513.1 1181.0,513.1 1186.6,513.1 1192.2,513.1 1197.9,509.0 1203.5,513.1 1209.1,513.1 1214.7,517.3 1220.4,513.1 1226.0,509.0 1231.6,476.0 1237.2,542.0 1242.9,542.0 1248.5,542.0 1254.1,542.0 1259.7,542.0 1265.4,509.0 1271.0,509.0 1276.6,509.0 1282.2,509.0 1287.9,480.1 1293.5,513.1 1299.1,513.1 1304.8,513.1 1310.4,480.1 1316.0,542.0 1321.6,513.1 1327.3,546.1" fill="none" stroke="#fb6d84" stroke-width="1.6" stroke-linejoin="round"/>
<polyline points="449.6,527.8 480,524.3 511.6,521.2 589.7,521.2 629.1,525.5 709.3,525.5 748,513.2 787.3,525.5 832,529.7 866.3,521.3 905.6,525.3 945,542.2 1023.6,542 1063.2,525.4 1119.1,541.9 1159.1,529.7 1198.3,537.8 1238.3,517 1277,525.4 1316.4,554.4 1327.2,551.3" fill="none" stroke="#243857" stroke-width="1.6" stroke-linejoin="round"/>
<polyline points="449.6,451.3 455.2,467.8 460.9,455.4 466.5,459.5 472.1,455.4 477.7,459.5 483.4,467.8 489.0,467.8 494.6,471.9 500.2,467.8 505.9,463.6 511.5,471.9 517.1,463.6 522.7,463.6 528.4,463.6 534.0,463.6 539.6,467.8 545.2,463.6 550.9,467.8 556.5,471.9 562.1,467.8 567.7,467.8 573.4,467.8 579.0,467.8 584.6,467.8 590.2,463.6 595.9,459.5 601.5,467.8 607.1,471.9 612.8,471.9 618.4,463.6 624.0,467.8 629.6,467.8 635.3,467.8 640.9,463.6 646.5,463.6 652.1,463.6 657.8,463.6 663.4,459.5 669.0,513.1 674.6,463.6 680.3,455.4 685.9,455.4 691.5,455.4 697.1,471.9 702.8,471.9 708.4,467.8 714.0,471.9 719.6,463.6 725.3,459.5 730.9,459.5 736.5,459.5 742.2,463.6 747.8,463.6 753.4,459.5 759.0,463.6 764.7,463.6 770.3,463.6 775.9,447.1 781.5,459.5 787.2,459.5 792.8,455.4 798.4,459.5 804.0,443.0 809.7,443.0 815.3,459.5 820.9,459.5 826.5,463.6 832.2,455.4 837.8,459.5 843.4,471.9 849.0,459.5 854.7,459.5 860.3,463.6 865.9,463.6 871.6,459.5 877.2,459.5 882.8,463.6 888.4,455.4 894.1,455.4 899.7,459.5 905.3,459.5 910.9,459.5 916.6,451.3 922.2,455.4 927.8,451.3 933.4,455.4 939.1,455.4 944.7,463.6 950.3,467.8 955.9,463.6 961.6,463.6 967.2,463.6 972.8,463.6 978.4,459.5 984.1,484.3 989.7,463.6 995.3,459.5 1000.9,459.5 1006.6,459.5 1012.2,459.5 1017.8,459.5 1023.5,459.5 1029.1,467.8 1034.7,463.6 1040.3,463.6 1046.0,467.8 1051.6,467.8 1057.2,467.8 1062.8,459.5 1068.5,459.5 1074.1,455.4 1079.7,455.4 1085.3,447.1 1091.0,451.3 1096.6,447.1 1102.2,443.0 1107.8,438.9 1113.5,447.1 1119.1,455.4 1124.7,447.1 1130.3,447.1 1136.0,443.0 1141.6,443.0 1147.2,443.0 1152.8,443.0 1158.5,443.0 1164.1,443.0 1169.7,438.9 1175.4,443.0 1181.0,447.1 1186.6,451.3 1192.2,447.1 1197.9,451.3 1203.5,447.1 1209.1,447.1 1214.7,463.6 1220.4,451.3 1226.0,443.0 1231.6,451.3 1237.2,451.3 1242.9,447.1 1248.5,451.3 1254.1,451.3 1259.7,451.3 1265.4,451.3 1271.0,453.3 1276.6,455.4 1282.2,455.4 1287.9,451.3 1293.5,451.3 1299.1,447.1 1304.8,447.1 1310.4,443.0 1316.0,447.1 1321.6,451.3 1327.3,451.3" fill="none" stroke="#2aa244" stroke-width="1.6" stroke-linejoin="round"/>
<circle cx="409.5" cy="453.29999999999995" r="12.2" fill="#000" opacity=".07"/>
<circle cx="409.5" cy="452.4" r="11.6" fill="#fff" stroke="#e6e6e6" stroke-width=".8"/>
<path d="M406.0 451.2h7M406.0 453.59999999999997h7" stroke="#c8c8c8" stroke-width="1"/>
<circle cx="409.5" cy="693.9" r="12.2" fill="#000" opacity=".07"/>
<circle cx="409.5" cy="693" r="11.6" fill="#fff" stroke="#e6e6e6" stroke-width=".8"/>
<path d="M406.0 691.8h7M406.0 694.2h7" stroke="#c8c8c8" stroke-width="1"/>
<circle cx="1268.5" cy="761.1999999999999" r="12.2" fill="#000" opacity=".07"/>
<circle cx="1268.5" cy="760.3" r="11.6" fill="#fff" stroke="#e6e6e6" stroke-width=".8"/>
<path d="M1267.3 756.8v7M1269.7 756.8v7" stroke="#c8c8c8" stroke-width="1"/>
<circle cx="1324.2" cy="761.1999999999999" r="12.2" fill="#000" opacity=".07"/>
<circle cx="1324.2" cy="760.3" r="11.6" fill="#fff" stroke="#e6e6e6" stroke-width=".8"/>
<path d="M1323.0 756.8v7M1325.4 756.8v7" stroke="#c8c8c8" stroke-width="1"/>
<circle cx="1272.9" cy="433.9" r="5.3" fill="none" stroke="#222" stroke-width="1.1"/><path d="M1270.3 433.9h5.2M1276.6 437.8l3.2 3.4" stroke="#222" stroke-width="1.2"/>
<text x="1284.6" y="437.8" font-family="Liberation Sans" font-size="8.9" fill="#222">Show all</text>
<text x="453" y="435.3" font-family="Liberation Sans" font-size="8.6" textLength="87" lengthAdjust="spacing" fill="#555">JS chart by amCharts</text>
<circle cx="1338.3" cy="427.3" r="13.8" fill="#000" opacity=".06"/><circle cx="1338.3" cy="426.4" r="13.2" fill="#fff" stroke="#ececec" stroke-width=".8"/>
<path d="M1337.1 421h2.4v4h2.2l-3.4 3.6-3.4-3.6h2.2z" fill="#c4c4c4"/><rect x="1334" y="430.4" width="8.5" height="1.2" fill="#c4c4c4"/>
<line x1="405.6" y1="795.6" x2="429.0" y2="795.6" stroke="#fb6d84" stroke-width="1.8"/><circle cx="417.5" cy="795.6" r="2.6" fill="#fff" stroke="#fb6d84" stroke-width="1.5"/>
<text class="lg" x="432.90000000000003" y="799" font-family="Liberation Sans" font-size="8.8" textLength="148" lengthAdjust="spacing" fill="#222">generation brand - Санкт-Петербург</text>
<line x1="633" y1="795.6" x2="656.4" y2="795.6" stroke="#2aa244" stroke-width="1.8"/><circle cx="644.9" cy="795.6" r="2.6" fill="#fff" stroke="#2aa244" stroke-width="1.5"/>
<text class="lg" x="660.3" y="799" font-family="Liberation Sans" font-size="8.8" textLength="84.3" lengthAdjust="spacing" fill="#222">pravdaserm - Россия</text>
<line x1="858.4" y1="795.6" x2="881.8" y2="795.6" stroke="#e8a04a" stroke-width="1.8"/><circle cx="870.3" cy="795.6" r="2.6" fill="#fff" stroke="#e8a04a" stroke-width="1.5"/>
<text class="lg" x="885.6999999999999" y="799" font-family="Liberation Sans" font-size="8.8" textLength="129.6" lengthAdjust="spacing" fill="#222">рейтинг губернаторов - Россия</text>
<line x1="1085.3" y1="795.6" x2="1108.7" y2="795.6" stroke="#2aa244" stroke-width="1.8"/><circle cx="1097.2" cy="795.6" r="2.6" fill="#fff" stroke="#2aa244" stroke-width="1.5"/>
<text class="lg" x="1112.6" y="799" font-family="Liberation Sans" font-size="8.8" textLength="97.8" lengthAdjust="spacing" fill="#222">Верь в Россию - Россия</text>
</svg>
</div></div>
</body></html>
